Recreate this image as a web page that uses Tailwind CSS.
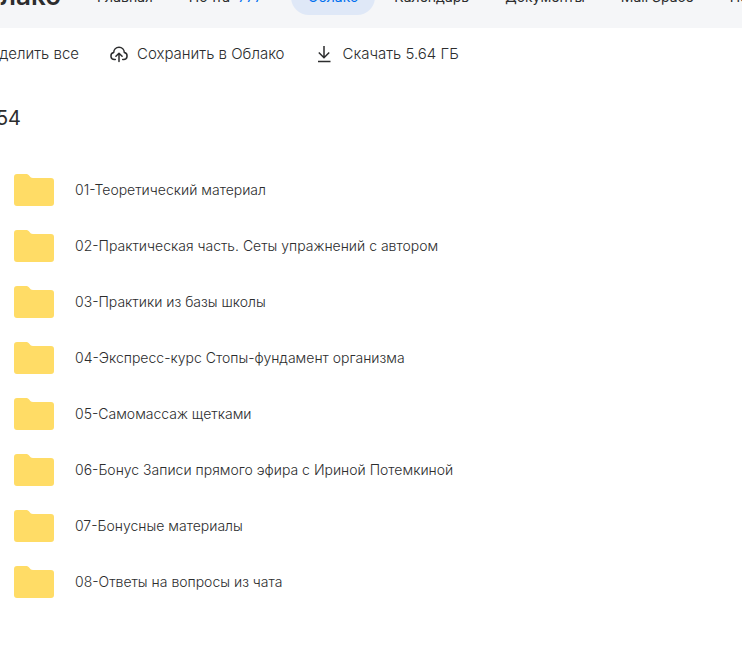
<!DOCTYPE html>
<html lang="ru">
  <head>
    <meta charset="UTF-8" />
    <meta name="viewport" content="width=device-width, initial-scale=1.0" />
    <title>Облако</title>
    <script src="https://cdn.jsdelivr.net/npm/@tailwindcss/browser@4"></script>
  </head>
  <body class="bg-white font-['Inter',sans-serif] text-[#2c2d2e] overflow-x-hidden">
    <!-- Шапка -->
    <header class="flex items-end h-7 pb-[13px] bg-[#f5f6f8] overflow-hidden">
      <a href="#" class="flex justify-end w-[61px] shrink-0 mr-[19px] pb-[3px] text-[26px] leading-8 font-semibold">Облако</a>
      <nav class="flex gap-[2px] text-[14px] leading-5 whitespace-nowrap">
        <a href="#" class="px-[17px] py-2">Главная</a>
        <a href="#" class="px-[17px] py-2">Почта <span class="ml-1 text-[#0070f0]">777+</span></a>
        <a href="#" class="px-[17px] py-2 rounded-[18px] bg-[#dfe8f7] text-[#0070f0]">Облако</a>
        <a href="#" class="px-[17px] py-2">Календарь</a>
        <a href="#" class="px-[17px] py-2">Документы</a>
        <a href="#" class="px-[17px] py-2">Mail Space</a>
        <a href="#" class="px-[17px] py-2">Почта для бизнеса</a>
      </nav>
    </header>

    <!-- Панель действий -->
    <div class="flex items-center h-[52px] text-[15px] leading-5 font-light whitespace-nowrap">
      <button type="button" class="flex justify-end w-[79px] shrink-0 mr-[30px]">Выделить все</button>
      <button type="button" class="flex items-center gap-2 mr-[30px]">
        <svg class="size-5" viewBox="0 0 20 20" fill="none" stroke="currentColor" stroke-width="1.5" stroke-linecap="round" stroke-linejoin="round">
          <path d="M6.3 15.6H5.4A3.6 3.6 0 0 1 4.7 8.5C4.8 5.4 7 3.2 10 3.2S15.2 5.4 15.3 8.5A3.6 3.6 0 0 1 14.6 15.6H13.7" />
          <path d="M10 17.5V9.5M6.9 12.3L10 9.2L13.1 12.3" />
        </svg>
        Сохранить в Облако
      </button>
      <button type="button" class="flex items-center gap-2">
        <svg class="size-5" viewBox="0 0 20 20" fill="none" stroke="currentColor" stroke-width="1.5">
          <path d="M10 2V13.5M4.8 8.5L10 13.7L15.2 8.500M4 17.5H16.500" />
        </svg>
        Скачать 5.64 ГБ
      </button>
    </div>

    <!-- Список папок -->
    <main>
      <h1 class="flex justify-end w-[21px] mt-[26px] mb-8 text-[20px] leading-6">54</h1>
      <ul class="text-[14px] leading-5 font-light">
        <li><a href="#" class="flex items-center gap-[21px] h-14 pl-3.5">
          <svg class="w-10 h-8 shrink-0" viewBox="0 0 40 32"><path fill="#ffdc66" d="M3 0H12.5C15.5 0 15.5 4 19 4H37A3 3 0 0 1 40 7V29A3 3 0 0 1 37 32H3A3 3 0 0 1 0 29V3A3 3 0 0 1 3 0Z" /></svg>
          01-Теоретический материал
        </a></li>
        <li><a href="#" class="flex items-center gap-[21px] h-14 pl-3.5">
          <svg class="w-10 h-8 shrink-0" viewBox="0 0 40 32"><path fill="#ffdc66" d="M3 0H12.5C15.5 0 15.5 4 19 4H37A3 3 0 0 1 40 7V29A3 3 0 0 1 37 32H3A3 3 0 0 1 0 29V3A3 3 0 0 1 3 0Z" /></svg>
          02-Практическая часть. Сеты упражнений с автором
        </a></li>
        <li><a href="#" class="flex items-center gap-[21px] h-14 pl-3.5">
          <svg class="w-10 h-8 shrink-0" viewBox="0 0 40 32"><path fill="#ffdc66" d="M3 0H12.5C15.5 0 15.5 4 19 4H37A3 3 0 0 1 40 7V29A3 3 0 0 1 37 32H3A3 3 0 0 1 0 29V3A3 3 0 0 1 3 0Z" /></svg>
          03-Практики из базы школы
        </a></li>
        <li><a href="#" class="flex items-center gap-[21px] h-14 pl-3.5">
          <svg class="w-10 h-8 shrink-0" viewBox="0 0 40 32"><path fill="#ffdc66" d="M3 0H12.5C15.5 0 15.5 4 19 4H37A3 3 0 0 1 40 7V29A3 3 0 0 1 37 32H3A3 3 0 0 1 0 29V3A3 3 0 0 1 3 0Z" /></svg>
          04-Экспресс-курс Стопы-фундамент организма
        </a></li>
        <li><a href="#" class="flex items-center gap-[21px] h-14 pl-3.5">
          <svg class="w-10 h-8 shrink-0" viewBox="0 0 40 32"><path fill="#ffdc66" d="M3 0H12.5C15.5 0 15.5 4 19 4H37A3 3 0 0 1 40 7V29A3 3 0 0 1 37 32H3A3 3 0 0 1 0 29V3A3 3 0 0 1 3 0Z" /></svg>
          05-Самомассаж щетками
        </a></li>
        <li><a href="#" class="flex items-center gap-[21px] h-14 pl-3.5">
          <svg class="w-10 h-8 shrink-0" viewBox="0 0 40 32"><path fill="#ffdc66" d="M3 0H12.5C15.5 0 15.5 4 19 4H37A3 3 0 0 1 40 7V29A3 3 0 0 1 37 32H3A3 3 0 0 1 0 29V3A3 3 0 0 1 3 0Z" /></svg>
          06-Бонус Записи прямого эфира с Ириной Потемкиной
        </a></li>
        <li><a href="#" class="flex items-center gap-[21px] h-14 pl-3.5">
          <svg class="w-10 h-8 shrink-0" viewBox="0 0 40 32"><path fill="#ffdc66" d="M3 0H12.5C15.5 0 15.5 4 19 4H37A3 3 0 0 1 40 7V29A3 3 0 0 1 37 32H3A3 3 0 0 1 0 29V3A3 3 0 0 1 3 0Z" /></svg>
          07-Бонусные материалы
        </a></li>
        <li><a href="#" class="flex items-center gap-[21px] h-14 pl-3.5">
          <svg class="w-10 h-8 shrink-0" viewBox="0 0 40 32"><path fill="#ffdc66" d="M3 0H12.5C15.5 0 15.5 4 19 4H37A3 3 0 0 1 40 7V29A3 3 0 0 1 37 32H3A3 3 0 0 1 0 29V3A3 3 0 0 1 3 0Z" /></svg>
          08-Ответы на вопросы из чата
        </a></li>
      </ul>
    </main>
  </body>
</html>
